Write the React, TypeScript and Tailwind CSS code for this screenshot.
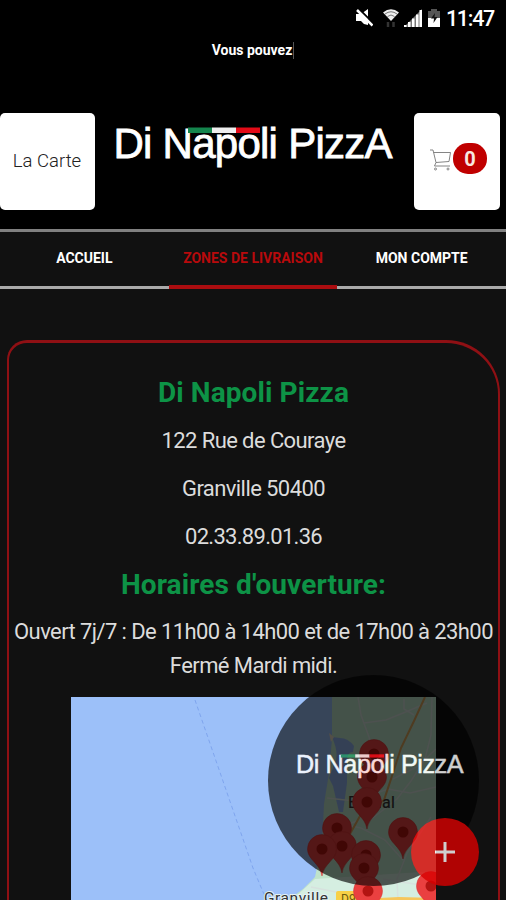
const TABS = [
  { label: 'ACCUEIL', active: false },
  { label: 'ZONES DE LIVRAISON', active: true },
  { label: 'MON COMPTE', active: false },
]

// centre of each marker head, in map coordinates
const PINS = [
  { x: 303, y: 57 },
  { x: 301, y: 80 },
  { x: 296, y: 105 },
  { x: 266, y: 131 },
  { x: 332, y: 135 },
  { x: 271, y: 149 },
  { x: 251, y: 152 },
  { x: 295, y: 158 },
  { x: 293, y: 171 },
  { x: 360, y: 189 },
  { x: 297, y: 194 },
]

function StatusBar() {
  return (
    <div className="flex h-9 items-center justify-end pr-[12px] text-white">
      <svg width="17" height="18" viewBox="0 0 17 18" className="mr-[10px]">
        <path d="M0 5h5l7-5v16l-4-1-3-3H0z" fill="#fff" />
        <path d="M3 0l14 14" stroke="#000" strokeWidth="2" />
        <path d="M1 1l15.500 15.500" stroke="#fff" strokeWidth="2.500" />
      </svg>
      <svg width="16" height="19" viewBox="0 0 16 19" className="mr-[5px]">
        <path d="M0 3.500q8-6.500 16 0L8 12z" fill="#eee" />
        <path d="M2 5q6-4.500 12 0M4.500 7.500q3.500-3 7 0" fill="none" stroke="#777" />
        <path d="M5 13v5M10.500 13v5" fill="none" stroke="#333" strokeWidth="2.500" />
      </svg>
      <svg width="18" height="18" viewBox="0 0 18 18" className="mr-[6px]">
        <path d="M0 18L18 0v18z" fill="#777" />
        <path d="M0 16h2.500v2H0zM4 13h2.500v5H4zM8 9.500h2.500V18H8zM12 5.500h2.500V18H12zM15.500 1H18v17h-2.500z" fill="#fff" />
      </svg>
      <svg width="12" height="18" viewBox="0 0 12 18" className="mr-[6px]">
        <path d="M3 0h6v2h3v8H0V2h3z" fill="#555" />
        <path d="M0 9h12v9H0z" fill="#fff" />
        <path d="M7 4L3 9.500h3L5.500 14 9.500 8H6.500z" fill="#111" />
      </svg>
      <span className="mt-0.5 text-[21.5px] leading-none font-medium tracking-[-1.3px]">11:47</span>
    </div>
  )
}

function Logo({ className }: { className: string }) {
  return (
    <svg viewBox="0 0 280 50" className={className}>
      <text
        x="-1.500"
        y="36"
        fill="#fff"
        stroke="#fff"
        strokeWidth="0.800"
        fontSize="42"
        textLength="279"
        className="font-['Liberation_Sans',sans-serif]"
      >
        Di Napoli PizzA
      </text>
      <path d="M73 5.500h24v5.500H73z" fill="#14854d" />
      <path d="M97 5.500h24v5.500H97z" fill="#eee" />
      <path d="M121 5.500h24v5.500h-24z" fill="#e30b17" />
    </svg>
  )
}

function CartIcon() {
  return (
    <svg width="22" height="22" viewBox="0 0 22 22" fill="none" stroke="#777" strokeWidth="0.900">
      <path d="M0 1h3l3 12.500 13-1 1.500-9L3.500 3.500M6 13.500L4.500 17H20" />
      <circle cx="5.500" cy="20" r="1" />
      <circle cx="18" cy="20" r="1" />
    </svg>
  )
}

function Header() {
  return (
    <header className="h-[229px] bg-black">
      <StatusBar />
      <div className="flex h-[28px] items-center justify-center text-[14px] font-bold text-white">
        Vous pouvez
        <span className="ml-px h-[17px] w-px bg-[#555]" />
      </div>
      <div className="mt-[49px] flex h-[97px] justify-between pr-[6px]">
        <button className="w-[95px] rounded-[5px] bg-white pr-px text-[18.500px] font-light text-[#222]">La Carte</button>
        <Logo className="mt-[9px] h-[50px] w-[280px] overflow-visible" />
        <button className="flex w-[86px] items-center rounded-[5px] bg-white pb-1 pl-4">
          <CartIcon />
          <span className="mb-0.5 ml-px flex h-[31px] w-[34px] items-center justify-center rounded-[15px] bg-[#c00000] text-[20px] font-bold text-[#f8e8e0]">
            0
          </span>
        </button>
      </div>
    </header>
  )
}

function Tabs() {
  return (
    <nav className="grid h-[60px] grid-cols-3 border-t-[3px] border-[#808080]">
      {TABS.map((tab) => (
        <a
          key={tab.label}
          className={
            tab.active
              ? 'flex items-center justify-center border-b-4 border-[#ab0d10] text-[14px] font-bold text-[#b80a0c]'
              : 'flex items-center justify-center border-b-[3px] border-[#aaa] pb-px text-[14px] font-bold text-white'
          }
        >
          <span className="pb-px">{tab.label}</span>
        </a>
      ))}
    </nav>
  )
}

function AreaMap() {
  return (
    <svg width="365" height="204" viewBox="0 0 365 204" className="block">
      <path d="M0 0h365v204H0z" fill="#9cc0f9" />
      <path d="M124 3l58 168 10 24 5 9" fill="none" stroke="#7fa5ee" strokeDasharray="4 3" />

      {/* land, beach and the estuary */}
      <path d="M261 0v42l-3 34-5 31-2 40-7 33-12 12-16 12h149V0z" fill="#bfe3ca" />
      <path d="M244 182l-10 9-14 13h145v-30z" fill="#d5eee1" />
      <path d="M261 40l8 1q8 0 14 8l-1 6q-6 0-6 9l0 22-4 29h-4l-6-26-4-8 5-13q6-10-2-28z" fill="#93b4ee" />
      <path d="M258 36l5 4-3 5z" fill="#e8dcc5" />

      {/* minor roads */}
      <g fill="none" stroke="#d7e2de" strokeWidth="1.500">
        <path d="M287 0l3 18 8 22 5 17M293 26l22-3 22-9 19-8M333 2v10l10 6" />
        <path d="M361 0l-1 38-6 24-14 22-14 18-28 22" />
        <path d="M365 90l-26 6-22-4-34 12-27-3M365 52l-19 18-24 12" />
        <path d="M262 125l28 6 24 12 18 20M252 136l34-12M327 204l-1-22 10-26 24-36" />
        <path d="M240 190l30 6M312 182l50 8" />
      </g>
      <path d="M354 0l-11 24-13 27-9 28-8 24-24 16-10 18-4 9" fill="none" stroke="#d9a45c" strokeWidth="2" />
      <path d="M288 204l40-2 37 1" fill="none" stroke="#f6c65b" strokeWidth="4" />

      <text x="277" y="111" fontSize="16" fill="#333" stroke="#333" strokeWidth="0.200" textLength="47">
        Bréhal
      </text>
      <text
        x="193"
        y="206"
        fontSize="15.500"
        fill="#333"
        stroke="#e5f2f4"
        strokeWidth="2"
        paintOrder="stroke"
        textLength="64"
      >
        Granville
      </text>
      <rect x="265" y="194" width="27" height="16" rx="2" fill="#f8d046" />
      <text x="270" y="206" fontSize="12" fill="#6b5a10">
        D9
      </text>

      {PINS.map((pin) => (
        <g key={`${pin.x}-${pin.y}`} transform={`translate(${pin.x} ${pin.y})`}>
          <path
            d="M0 27C-2 14-14.500 11-14.500 0a14.500 14.500 0 0 1 29 0C14.500 11 2 14 0 27z"
            fill="#ea4040"
            stroke="#d53232"
            strokeWidth="0.500"
          />
          <circle r="5.500" fill="#b31412" />
        </g>
      ))}
    </svg>
  )
}

function StoreCard() {
  return (
    <section className="mt-[51px] ml-[7px] h-[620px] w-[493px] rounded-tl-[20px] rounded-tr-[54px] border-x-2 border-t-[3px] border-[#8f1014] pt-[26px] text-center text-[22px] tracking-[-0.59px] text-[#dcdcdc]">
      <h2 className="h-12 text-[28px] leading-[48px] font-bold tracking-[0.1px] text-[#0d9346]">Di Napoli Pizza</h2>
      <p className="h-12 leading-[48px]">122 Rue de Couraye</p>
      <p className="h-12 leading-[48px]">Granville 50400</p>
      <p className="h-12 leading-[48px] tracking-[-0.7px]">02.33.89.01.36</p>
      <h2 className="h-12 text-[28px] leading-[48px] font-bold tracking-[0.1px] text-[#0d9346]">
        Horaires d'ouverture:
      </h2>
      <p className="mt-[6px] leading-[34px] whitespace-nowrap">
        Ouvert 7j/7 : De 11h00 à 14h00 et de 17h00 à 23h00
        <br />
        Fermé Mardi midi.
      </p>
      <div className="mt-[14px] ml-[62px] tracking-normal">
        <AreaMap />
      </div>
    </section>
  )
}

function FloatingBubble() {
  return (
    <div className="absolute top-[675px] left-[268px] size-[211px] opacity-[0.8]">
      <div className="size-full rounded-full bg-black/80 pt-[76px] pl-[29px]">
        <Logo className="h-[30px] w-[168px] overflow-visible" />
      </div>
      <button className="absolute right-0 bottom-0 flex size-[68px] items-center justify-center rounded-full bg-[#d80000]">
        <svg width="22" height="22" viewBox="0 0 22 22">
          <path d="M11 1v20M1 11h20" stroke="#fff" strokeWidth="3" />
        </svg>
      </button>
    </div>
  )
}

export default function App() {
  return (
    <div className="relative h-[900px] w-[506px] overflow-hidden bg-[#111] font-['Roboto',sans-serif]">
      <Header />
      <Tabs />
      <StoreCard />
      <FloatingBubble />
    </div>
  )
}
